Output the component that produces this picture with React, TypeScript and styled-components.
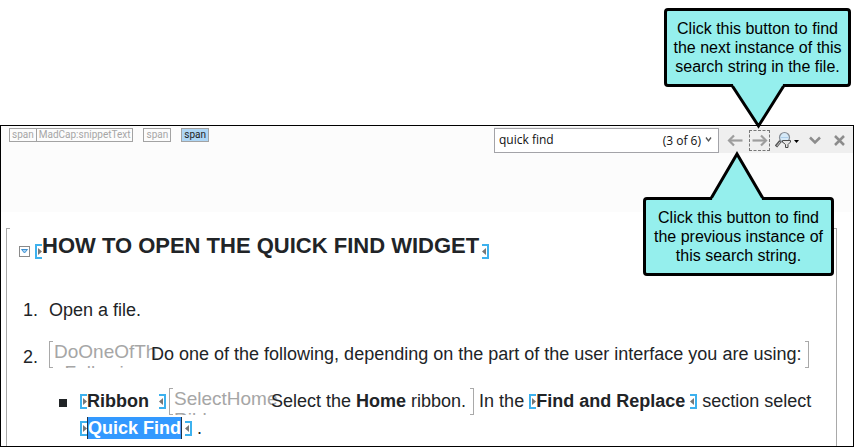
import React from "react";
import styled, { createGlobalStyle } from "styled-components";

const GlobalStyle = createGlobalStyle`
  * { box-sizing: border-box; }
  body {
    margin: 0;
    background: #fff;
    color: #212427;
    font-family: "Liberation Sans", Arial, sans-serif;
  }
`;

const Page = styled.div`
  min-height: 100vh;
  display: flex;
  flex-direction: column;
  padding-top: 125px;
`;

const Editor = styled.main`
  position: relative;
  flex: 1;
  display: flex;
  flex-direction: column;
  border: 1px solid #000;
`;

const TopArea = styled.header`
  display: flex;
  justify-content: space-between;
  align-items: flex-start;
  height: 86px;
  padding: 1px 0 0 9px;
  background: #fcfcfc;
`;

const TagBar = styled.nav`
  display: flex;
  gap: 11px;
  padding-top: 1px;
`;

const TagGroup = styled.div`
  display: flex;
`;

const Tag = styled.button<{ $active?: boolean }>`
  height: 14px;
  margin: 0 0 0 -1px;
  padding: 0 2px;
  border: 1px solid #a3a3a3;
  border-radius: 0;
  background: ${(p) => (p.$active ? "#aed6f5" : "#fcfcfc")};
  color: ${(p) => (p.$active ? "#222" : "#a6a6a6")};
  font: 10px/12px Roboto, sans-serif;
`;

const FindBar = styled.form`
  display: flex;
  align-items: center;
  height: 26px;
  background: #efefef;
`;

const SearchBox = styled.div`
  display: flex;
  align-items: center;
  width: 225px;
  height: 25px;
  margin-right: 5px;
  padding: 0 2px 0 4px;
  border: 1px solid #a3a3a8;
  background: #fff;
  color: #111;
  font: 12px/16px "Open Sans", sans-serif;
`;

const SearchInput = styled.input`
  flex: 1;
  min-width: 0;
  padding: 0;
  border: 0;
  outline: 0;
  background: transparent;
  color: inherit;
  font: inherit;
`;

const MatchCount = styled.span`
  padding-top: 2px;
`;

const NavButtons = styled.div`
  display: flex;
  gap: 4px;
`;

const IconButton = styled.button<{ $w: number; $focused?: boolean }>`
  display: flex;
  align-items: center;
  justify-content: center;
  width: ${(p) => p.$w}px;
  height: 21px;
  padding: 0;
  border: ${(p) => (p.$focused ? "1px dashed #777" : "0")};
  background: none;
`;

const Document = styled.article`
  position: relative;
  flex: 1;
  margin: 16px 16px 0 5px;
  padding-top: 5px;
  border: solid #a9a9a9;
  border-width: 0 1px;

  &::before,
  &::after {
    content: "";
    position: absolute;
    top: 0;
    width: 3px;
    height: 1px;
    background: #a9a9a9;
  }
  &::before { left: 0; }
  &::after { right: 0; }
`;

const TitleRow = styled.div`
  display: flex;
  align-items: flex-start;
  padding-left: 12px;
`;

const Title = styled.h1`
  margin: 0;
  font-size: 22px;
  line-height: 26px;
  font-weight: 700;
`;

const Toggle = styled.button`
  display: flex;
  align-items: center;
  justify-content: center;
  width: 11px;
  height: 11px;
  margin: 13px 5px 0 0;
  padding: 0;
  border: 1px solid #8a8a8a;
  background: #fff;
`;

const Steps = styled.ol`
  display: flex;
  flex-direction: column;
  gap: 17px;
  margin: 38px 0 0;
  padding: 0;
  list-style: none;
  font-size: 18px;
  line-height: 27px;
`;

const Step = styled.li`
  display: grid;
  grid-template-columns: 31px 1fr;
  column-gap: 11px;
`;

const StepNumber = styled.span<{ $lowered?: boolean }>`
  padding-top: ${(p) => (p.$lowered ? 3 : 0)}px;
  text-align: right;
`;

const Paragraph = styled.p`
  margin: 0;
`;

const Bullets = styled.ul`
  margin: 20px 0 0;
  padding: 0;
  list-style: none;
`;

const Bullet = styled.li`
  display: grid;
  grid-template-columns: 8px 1fr;
  column-gap: 13px;
  padding-left: 10px;

  &::before {
    content: "";
    width: 8px;
    height: 8px;
    margin-top: 11px;
    background: #212427;
  }
`;

const NoWrap = styled.span`
  white-space: nowrap;
`;

const MarkerSvg = styled.svg<{ $drop: number; $gap: number }>`
  display: inline-block;
  vertical-align: -${(p) => p.$drop}px;
  margin-left: ${(p) => p.$gap}px;
`;

const SnippetLabel = styled.span<{ $gap?: number }>`
  display: inline-block;
  vertical-align: top;
  width: 109px;
  height: 27px;
  margin-left: ${(p) => p.$gap ?? 0}px;
  margin-right: -7px;
  padding-left: 4px;
  overflow: hidden;
  border-left: 1px solid #a9a9a9;
  background:
    linear-gradient(#a9a9a9, #a9a9a9) left top / 3px 1px no-repeat,
    linear-gradient(#a9a9a9, #a9a9a9) left bottom / 3px 1px no-repeat;
  color: #a6a6a6;
  font-size: 19px;
  line-height: 21px;
  white-space: pre;
`;

const SnippetEnd = styled.span`
  display: inline-block;
  vertical-align: top;
  width: 4px;
  height: 27px;
  margin-left: 4px;
  border: 1px solid #a9a9a9;
  border-left: 0;
`;

const SnippetBody = styled.span`
  position: relative;
`;

const Match = styled.mark`
  display: inline-block;
  height: 22px;
  border: solid #1d3347;
  border-width: 0 1px;
  background: #3399ff;
  color: #fff;
  line-height: 23px;
`;

const Callout = styled.aside<{ $top: number; $right: number; $width: number }>`
  position: absolute;
  z-index: 2;
  top: ${(p) => p.$top}px;
  right: ${(p) => p.$right}px;
  width: ${(p) => p.$width}px;
  height: 79px;
  padding-top: 8px;
  border: 3px solid #000;
  border-radius: 4px;
  background: #95efed;
  color: #000;
  font-size: 16px;
  line-height: 19px;
  text-align: center;
  white-space: nowrap;
`;

const Pointer = styled.svg<{ $up?: boolean; $left: number }>`
  position: absolute;
  left: ${(p) => p.$left}px;
  ${(p) => (p.$up ? "bottom: calc(100% - 1px)" : "top: calc(100% - 1px)")};
`;

function Marker({ end, drop = 2, gap = 0 }: { end?: boolean; drop?: number; gap?: number }) {
  return (
    <MarkerSvg $drop={drop} $gap={gap} width="7" height="15" viewBox="0 0 7 15" aria-hidden="true">
      <g transform={end ? "matrix(-1 0 0 1 7 0)" : undefined}>
        <path d="M7 1H1V14H7" fill="none" stroke="#3db1ee" strokeWidth="2" />
        <path d="M3 4L7 7.5L3 11Z" fill="#777" />
      </g>
    </MarkerSvg>
  );
}

function ArrowIcon({ right }: { right?: boolean }) {
  return (
    <svg width="16" height="13" viewBox="0 0 16 13" aria-hidden="true">
      <g transform={right ? "matrix(-1 0 0 1 16 0)" : undefined} fill="none" stroke="#9d9d9d" strokeWidth="2.200">
        <path d="M2 6.5H15.500" />
        <path d="M7 1.500L2 6.500L7 11.500" />
      </g>
    </svg>
  );
}

function FindIcon() {
  return (
    <svg width="24" height="18" viewBox="0 0 24 18" aria-hidden="true">
      <path d="M5.500 10L1 15.500" stroke="#555" strokeWidth="3" />
      <path d="M5 11L1.800 15" stroke="#ccc" strokeWidth="1" />
      <circle cx="9.500" cy="6.500" r="5" fill="#d5e9f8" stroke="#858b93" strokeWidth="1.200" />
      <path d="M5.500 6.500H13.500" stroke="#aecfea" strokeWidth="1" />
      <path d="M7.500 9.500H15.500V11L13 13.500V16.500H10.500V13.500L7.500 11Z" fill="#e6e6e6" stroke="#4b4b4b" />
      <path d="M19 9H24L21.500 12Z" fill="#000" />
    </svg>
  );
}

export default function App() {
  return (
    <>
      <GlobalStyle />
      <Page>
        <Editor>
          <TopArea>
            <TagBar aria-label="Element path">
              <TagGroup>
                <Tag>span</Tag>
                <Tag>MadCap:snippetText</Tag>
              </TagGroup>
              <TagGroup>
                <Tag>span</Tag>
              </TagGroup>
              <TagGroup>
                <Tag $active>span</Tag>
              </TagGroup>
            </TagBar>
            <FindBar onSubmit={(e) => e.preventDefault()}>
              <SearchBox>
                <SearchInput aria-label="Find text" defaultValue="quick find" />
                <MatchCount>(3 of 6)</MatchCount>
                <IconButton type="button" $w={15} aria-label="Search history">
                  <svg width="7" height="6" viewBox="0 0 7 6" aria-hidden="true">
                    <path d="M1 0.500L3.500 4L6 0.500" fill="none" stroke="#555" strokeWidth="1.300" />
                  </svg>
                </IconButton>
              </SearchBox>
              <NavButtons>
                <IconButton type="button" $w={21} aria-label="Find previous">
                  <ArrowIcon />
                </IconButton>
                <IconButton type="button" $w={21} $focused aria-label="Find next">
                  <ArrowIcon right />
                </IconButton>
              </NavButtons>
              <IconButton type="button" $w={34} aria-label="Find options">
                <FindIcon />
              </IconButton>
              <IconButton type="button" $w={22} aria-label="Expand">
                <svg width="12" height="9" viewBox="0 0 12 9" aria-hidden="true">
                  <path d="M1 1.500L6 6.500L11 1.500" fill="none" stroke="#8c8c8c" strokeWidth="2.500" />
                </svg>
              </IconButton>
              <IconButton type="button" $w={27} aria-label="Close">
                <svg width="11" height="11" viewBox="0 0 11 11" aria-hidden="true">
                  <path d="M1 1L10 10M10 1L1 10" fill="none" stroke="#8c8c8c" strokeWidth="2.500" />
                </svg>
              </IconButton>
            </FindBar>
          </TopArea>

          <Document>
            <TitleRow>
              <Toggle aria-label="Collapse section">
                <svg width="7" height="5" viewBox="0 0 7 5" aria-hidden="true">
                  <path d="M0.500 0.500H6.500L3.500 4Z" fill="#9fd0f5" stroke="#3d8fd0" />
                </svg>
              </Toggle>
              <Title>
                <Marker drop={6} />
                HOW TO OPEN THE QUICK FIND WIDGET
                <Marker end drop={6} gap={3} />
              </Title>
            </TitleRow>
            <Steps>
              <Step>
                <StepNumber>1.</StepNumber>
                <Paragraph>Open a file.</Paragraph>
              </Step>
              <Step>
                <StepNumber $lowered>2.</StepNumber>
                <div>
                  <Paragraph>
                    <SnippetLabel>{"DoOneOfTh\n  Following"}</SnippetLabel>
                    <SnippetBody>
                      Do one of the following, depending on the part of the user interface you are using:
                    </SnippetBody>
                    <SnippetEnd />
                  </Paragraph>
                  <Bullets>
                    <Bullet>
                      <Paragraph>
                        <NoWrap>
                          <Marker />
                          <b>Ribbon</b>
                          <Marker end gap={10} />
                        </NoWrap>
                        <SnippetLabel $gap={3}>{"SelectHome\nRibbon"}</SnippetLabel>
                        <SnippetBody>
                          Select the <b>Home</b> ribbon.
                        </SnippetBody>
                        <SnippetEnd /> In the{" "}
                        <NoWrap>
                          <Marker />
                          <b>Find and Replace</b>
                          <Marker end gap={5} />
                        </NoWrap>{" "}
                        section select{" "}
                        <NoWrap>
                          <Marker />
                          <Match>
                            <b>Quick Find</b>
                          </Match>
                          <Marker end gap={3} /> .
                        </NoWrap>
                      </Paragraph>
                    </Bullet>
                  </Bullets>
                </div>
              </Step>
            </Steps>
          </Document>

          <Callout $top={-118} $right={2} $width={187}>
            Click this button to find
            <br />
            the next instance of this
            <br />
            search string in the file.
            <Pointer $left={62} width="58" height="46" viewBox="0 0 58 46" aria-hidden="true">
              <path d="M2 0L29 43L56 0Z" fill="#95efed" />
              <path d="M1 2.500H3L29.500 43L55 2.500H57" fill="none" stroke="#000" strokeWidth="3" />
              <path d="M4.500 0H53.500V3H4.500Z" fill="#95efed" />
            </Pointer>
          </Callout>
          <Callout $top={71} $right={19} $width={191}>
            Click this button to find
            <br />
            the previous instance of
            <br />
            this search string.
            <Pointer $up $left={62} width="58" height="51" viewBox="0 0 58 51" aria-hidden="true">
              <path d="M2 51L29 4L56 51Z" fill="#95efed" />
              <path d="M1 48.500H3L29 4L55 48.500H57" fill="none" stroke="#000" strokeWidth="3" />
              <path d="M4.500 48H53.500V51H4.500Z" fill="#95efed" />
            </Pointer>
          </Callout>
        </Editor>
      </Page>
    </>
  );
}
